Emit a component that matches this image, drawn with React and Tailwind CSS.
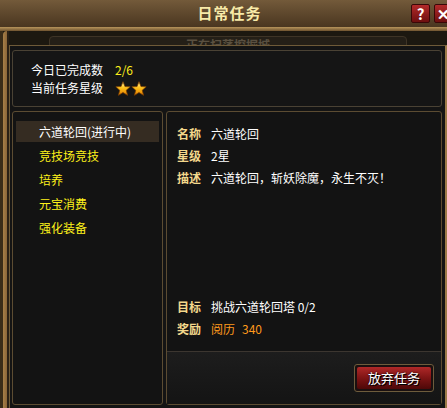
import React from 'react';

const font = { fontFamily: '"Noto Sans CJK SC", "Liberation Sans", sans-serif' };

const Star = () => (
  <svg width="16" height="15" viewBox="0 0 24 23">
    <defs>
      <linearGradient id="sg" x1="0" y1="0" x2="0" y2="1">
        <stop offset="0" stopColor="#fff6b0" />
        <stop offset="0.45" stopColor="#ffc21a" />
        <stop offset="1" stopColor="#e07a00" />
      </linearGradient>
    </defs>
    <path
      d="M12 1 L15 8.5 L23 9 L17 14.2 L19 22 L12 17.7 L5 22 L7 14.2 L1 9 L9 8.5 Z"
      fill="url(#sg)"
      stroke="#7a3d00"
      strokeWidth="1.2"
      strokeLinejoin="round"
    />
  </svg>
);

const tasks = ['竞技场竞技', '培养', '元宝消费', '强化装备'];

const Field = ({ label, children }) => (
  <div className="flex items-center h-[22px]">
    <span className="w-[24px] font-bold text-[#f3d88c]">{label}</span>
    <span className="ml-[10px] text-white flex items-center">{children}</span>
  </div>
);

export default function App() {
  return (
    <div className="w-[447px] h-[408px] overflow-hidden flex flex-col bg-[#1c1810] text-[12px]" style={font}>
      {/* title bar */}
      <div className="h-[27px] shrink-0 grid grid-cols-[1fr_auto_1fr] items-center bg-gradient-to-b from-[#735a3a] to-[#4a3620]">
        <div />
        <div className="pl-[12px] text-[15px] font-bold text-[#f8eaa8] tracking-[1px]">日常任务</div>
        <div className="flex justify-end items-center gap-[4px] mr-[-6px]">
          <div className="w-[19px] h-[19px] rounded-[2px] border border-[#3a0808] bg-gradient-to-b from-[#b32a2a] to-[#6e0f0f] flex items-center justify-center text-white font-bold text-[15px] leading-none">?</div>
          <div className="w-[19px] h-[19px] rounded-[2px] border border-[#3a0808] bg-gradient-to-b from-[#b32a2a] to-[#6e0f0f] flex items-center justify-center text-white font-bold text-[15px] leading-none">✕</div>
        </div>
      </div>
      <div className="h-[4px] shrink-0 bg-gradient-to-b from-[#b8955c] to-[#6e532f]" />

      {/* body */}
      <div className="flex-1 flex min-h-0">
        <div className="w-[9px] shrink-0 flex">
          <div className="w-[3px] bg-[#3a2c18]" />
          <div className="w-[4px] bg-gradient-to-r from-[#a88048] to-[#8a6538] rounded-tl-[4px]" />
          <div className="w-[2px] bg-[#2a2015]" />
        </div>
        <div className="flex-1 flex flex-col min-w-0">
          {/* background dialog peeking out */}
          <div className="h-[14px] shrink-0 overflow-hidden px-[40px] pt-[5px]">
            <div className="h-[20px] rounded-t-[4px] border border-[#3e3426] bg-[#241f17] flex justify-center">
              <span className="text-[12px] font-bold text-[#5a5040] leading-[16px]">正在扫荡挖掘城</span>
            </div>
          </div>

          {/* main panel */}
          <div className="flex-1 min-h-0 flex flex-col border-t border-l border-[#6e5a38] bg-[#141414] pl-[2px] pr-[3px] pt-[4px] border-r-[2px] border-r-[#9c7a48]">
            {/* summary */}
            <div className="h-[57px] shrink-0 border border-[#4a4234] rounded-[3px] bg-[#151515] pl-[18px] pt-[10px] text-white">
              <div className="flex items-center h-[18px]">
                <span className="w-[84px]">今日已完成数</span>
                <span className="text-[#ffef1a] text-[12px]">2/6</span>
              </div>
              <div className="flex items-center h-[18px]">
                <span className="w-[84px]">当前任务星级</span>
                <Star />
                <Star />
              </div>
            </div>

            <div className="flex-1 min-h-0 flex gap-[3px] mt-[4px] pb-[3px]">
              {/* task list */}
              <div className="w-[151px] shrink-0 border border-[#5c4c32] rounded-[3px] bg-[#131313] px-[3px] pt-[9px]">
                <div className="h-[21px] mb-[2px] bg-[#352c22] flex items-center pl-[23px] text-white">六道轮回(进行中)</div>
                {tasks.map((t) => (
                  <div key={t} className="h-[24px] flex items-center pl-[23px] text-[#fff21a]">{t}</div>
                ))}
              </div>

              {/* detail */}
              <div className="flex-1 min-w-0 border border-[#5c4c32] rounded-[3px] bg-[#131313] flex flex-col">
                <div className="px-[10px] pt-[11px]">
                  <Field label="名称">六道轮回</Field>
                  <Field label="星级">2星</Field>
                  <Field label="描述">六道轮回，斩妖除魔，永生不灭！</Field>
                </div>
                <div className="flex-1" />
                <div className="px-[10px] mb-[11px]">
                  <Field label="目标">挑战六道轮回塔 0/2</Field>
                  <Field label="奖励">
                    <span className="text-[#ff9a1c]">阅历</span>
                    <span className="ml-[7px] text-[#ff9a1c]">340</span>
                  </Field>
                </div>
                <div className="h-[1px] bg-[#3c3630]" />
                <div className="bg-gradient-to-b from-[#1d1d1d] to-[#141414] flex justify-end pt-[12px] pb-[12px] pr-[7px]">
                  <div className="w-[80px] h-[28px] rounded-[3px] border border-[#6e5c3c] bg-[#1a1010] p-[2px]">
                    <div className="w-full h-full rounded-[2px] bg-gradient-to-b from-[#b02828] via-[#7e1414] to-[#4e0808] flex items-center justify-center text-white text-[13px] [text-shadow:0_0_2px_#000,1px_1px_0_#000]">
                      放弃任务
                    </div>
                  </div>
                </div>
              </div>
            </div>
          </div>
        </div>
      </div>
    </div>
  );
}
